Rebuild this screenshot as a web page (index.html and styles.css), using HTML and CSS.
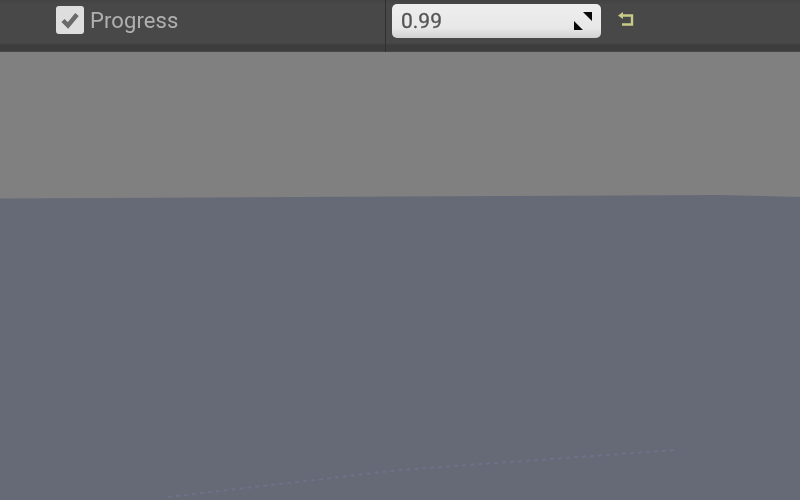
FILE: index.html
```html
<!DOCTYPE html>
<html lang="en">
<head>
  <meta charset="UTF-8">
  <title>Progress</title>
  <link rel="stylesheet" href="styles.css">
</head>
<body>
  <!-- Details panel row -->
  <div class="details">
    <div class="name-cell">
      <span class="checkbox">
        <svg viewBox="0 0 28 28" width="28" height="28"><path d="M7 14.5l5 5 9-11" fill="none" stroke="#6a6a6a" stroke-width="4.5"/></svg>
      </span>
      <span class="label">Progress</span>
    </div>
    <div class="value-cell">
      <div class="number-input">
        <span class="number">0.99</span>
        <svg class="drag-icon" viewBox="0 0 18 18" width="18" height="18"><path d="M9 0h9v9z M0 9l9 9H0z" fill="#0a0a0a"/></svg>
      </div>
      <svg class="reset-icon" viewBox="0 0 18 16" width="18" height="16"><path d="M5 3.5h10v9H5" fill="none" stroke="#c8cb88" stroke-width="2.4"/><path d="M1 3.5l5-3.5v7z" fill="#c8cb88"/></svg>
    </div>
  </div>

  <!-- Viewport -->
  <div class="viewport">
    <svg class="scene" viewBox="0 0 800 448" preserveAspectRatio="none">
      <polygon class="ground" points="0,146.5 300,145 500,144 720,143 800,145 800,448 0,448"/>
      <path class="streak" d="M168 445 L400 418 L675 398"/>
    </svg>
  </div>
</body>
</html>
```

FILE: styles.css
```css
html, body {
  margin: 0;
  height: 100%;
}

body {
  display: flex;
  flex-direction: column;
  height: 500px;
  overflow: hidden;
  font-family: Roboto, "Liberation Sans", sans-serif;
  background-color: #808080;
}

.details {
  display: flex;
  height: 52px;
  background: linear-gradient(#434343, #484848 4px, #484848 43px, #3d3d3d 45px, #3d3d3d 51px, #474747 51px);
}

.name-cell {
  display: flex;
  align-items: center;
  gap: 6px;
  width: 329px;
  padding: 0 0 12px 56px;
  border-right: 1px solid #303030;
}

.checkbox {
  display: block;
  width: 28px;
  height: 28px;
  background-color: #dedede;
  border-radius: 3px;
  filter: blur(0.6px);
}

.checkbox svg {
  display: block;
}

.label {
  font-size: 22px;
  letter-spacing: 0.1px;
  color: #b0b0b0;
  filter: blur(0.5px);
}

.value-cell {
  display: flex;
  align-items: flex-start;
  padding: 4px 0 0 6px;
}

.number-input {
  display: flex;
  align-items: center;
  justify-content: space-between;
  box-sizing: border-box;
  width: 209px;
  height: 34px;
  padding: 0 9px;
  border-radius: 5px;
  background: linear-gradient(#eeeeee, #e8e8e8 70%, #d2d2d2);
  filter: blur(0.6px);
}

.number {
  font-size: 21px;
  -webkit-text-stroke: 0.3px #555555;
  color: #555555;
}

.reset-icon {
  margin: 8px 0 0 16px;
  filter: blur(0.5px);
}

.viewport {
  flex: 1;
  min-height: 0;
}

.scene {
  display: block;
  width: 100%;
  height: 100%;
}

.ground {
  fill: #666a76;
}

.streak {
  fill: none;
  stroke: #6d7189;
  stroke-width: 2;
  stroke-dasharray: 4 4;
}
```
